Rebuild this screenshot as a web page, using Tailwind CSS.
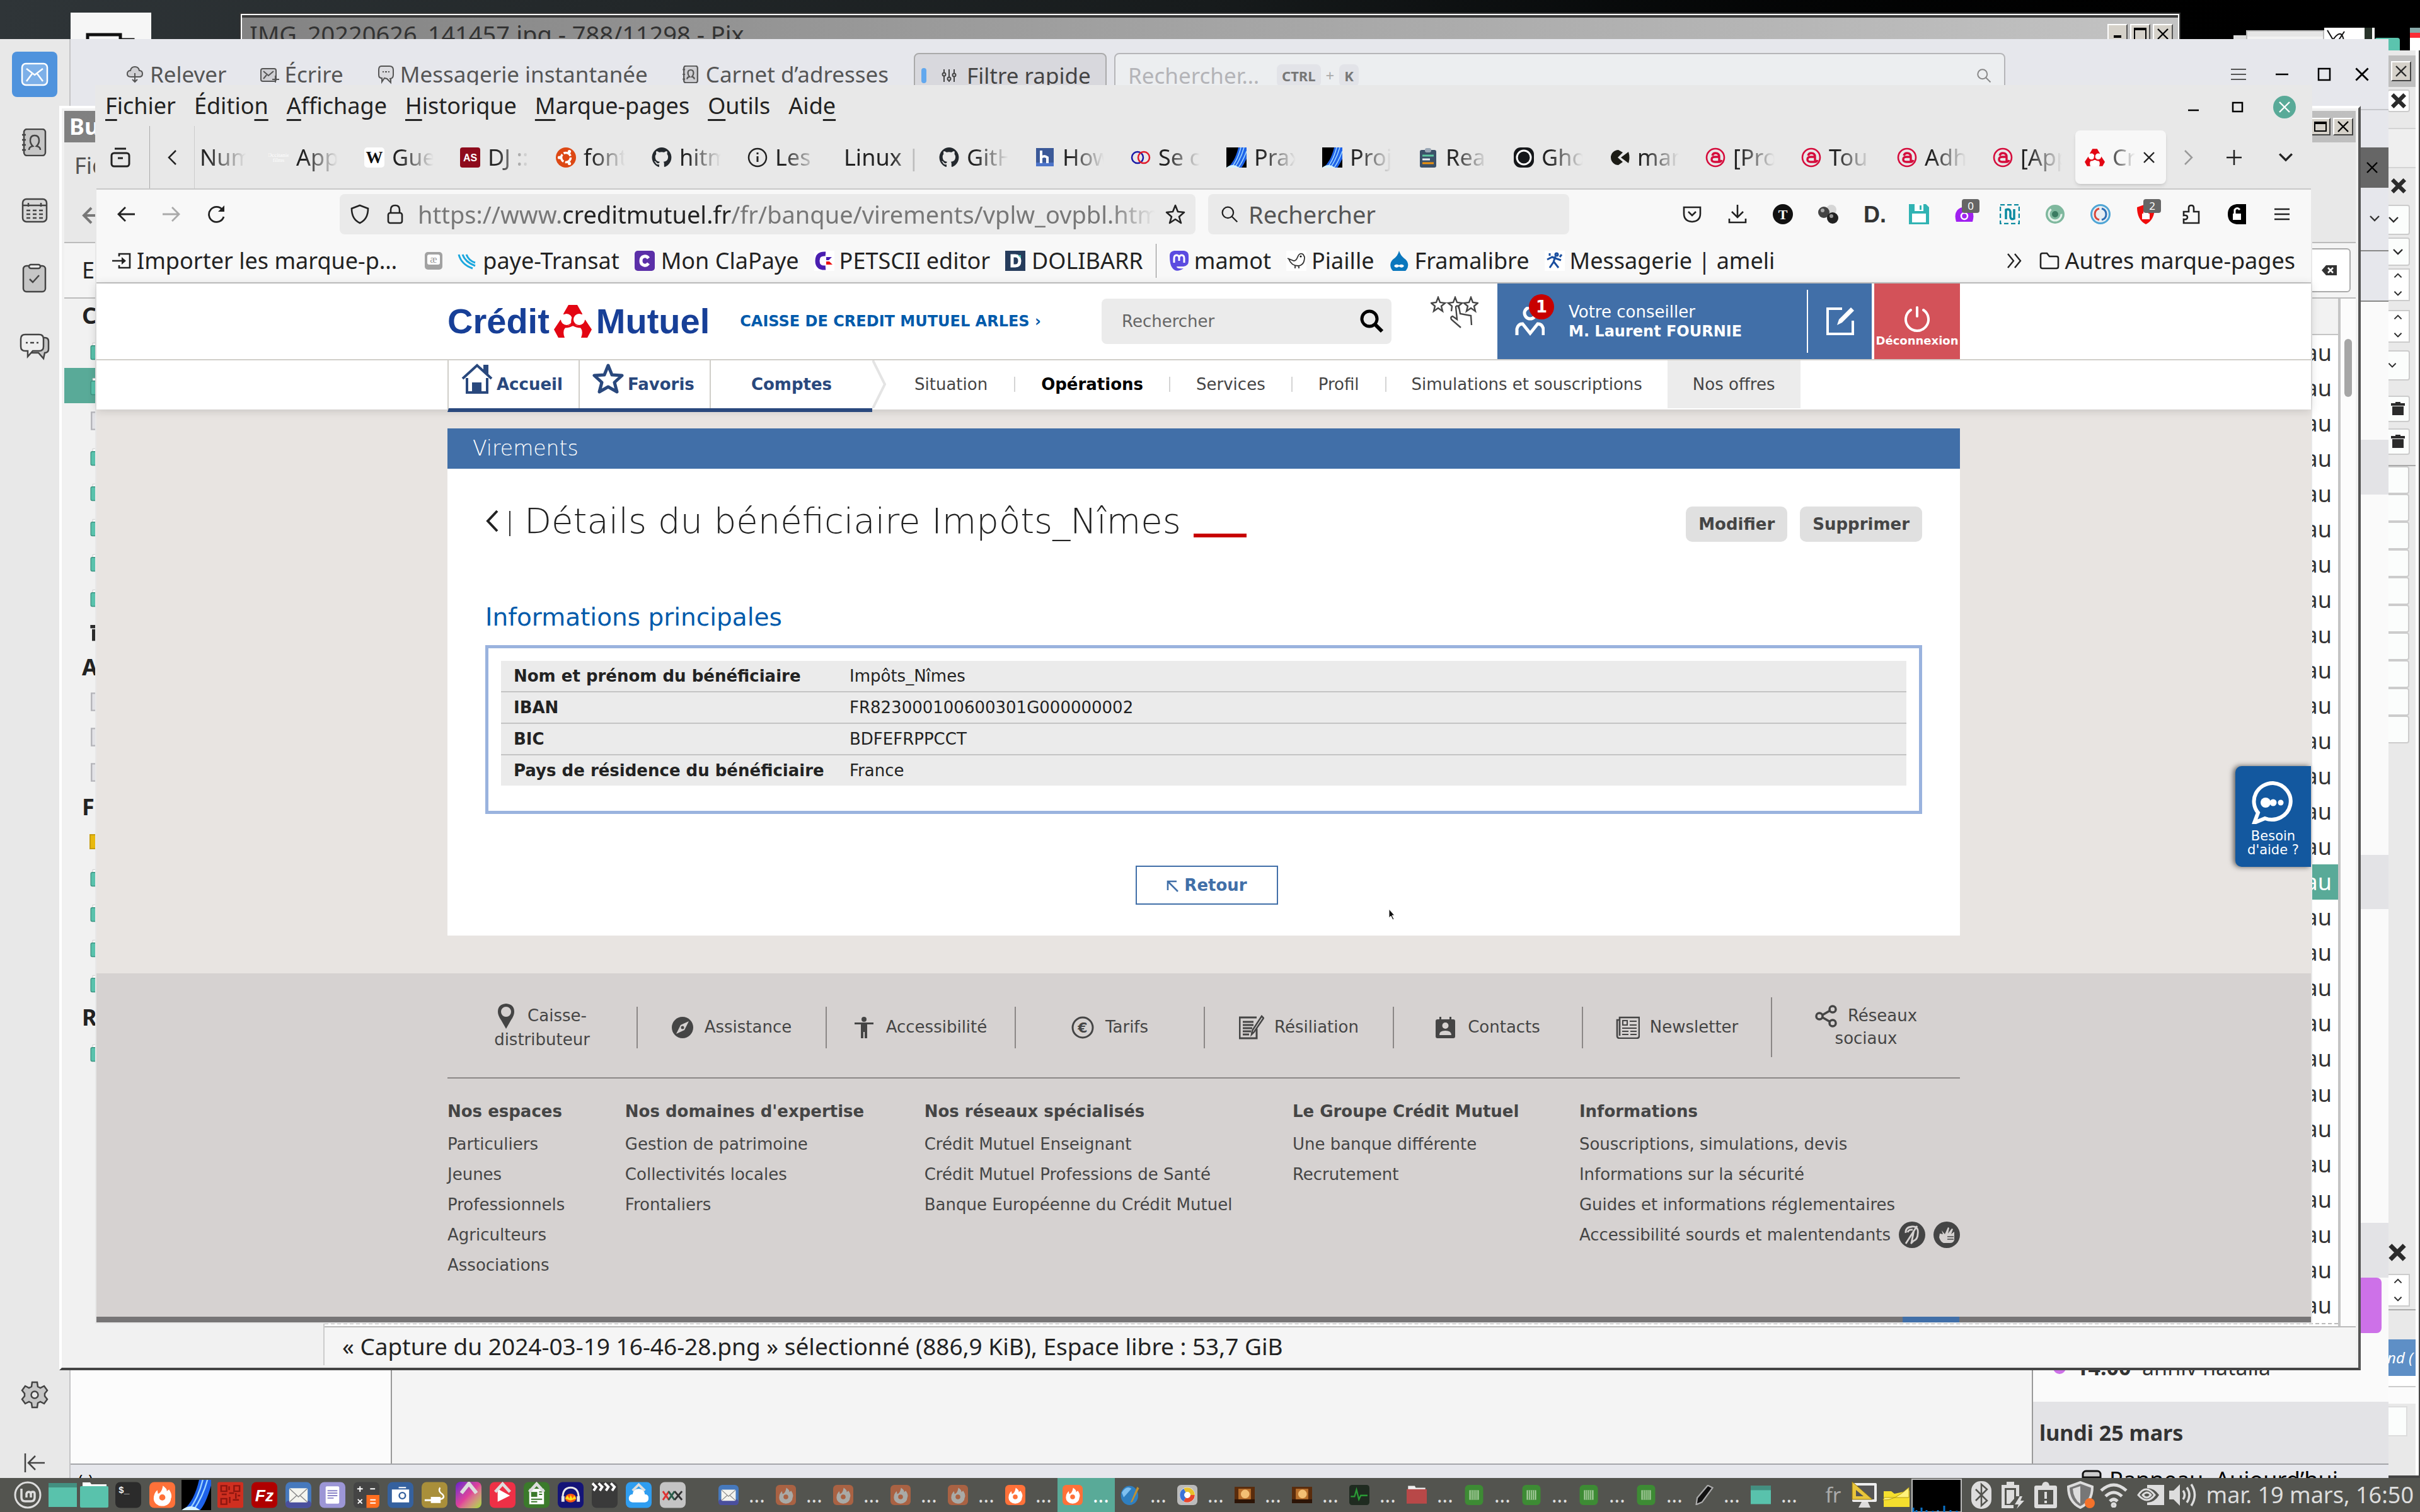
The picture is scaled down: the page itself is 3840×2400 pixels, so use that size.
<!DOCTYPE html>
<html lang="fr">
<head>
    <meta charset="UTF-8">
    <meta name="viewport" content="width=device-width, initial-scale=1.0">
    <title>Crédit Mutuel - Détails du bénéficiaire</title>
    <script src="https://cdn.jsdelivr.net/npm/@tailwindcss/browser@4"></script>
</head>
<body class="relative h-screen w-screen overflow-hidden bg-gradient-to-r from-[#2f3538] via-[#171b1c] to-black font-['Noto_Sans',sans-serif] text-[#222]">

<!-- Shared icons -->
<svg class="hidden">
    <symbol id="x" viewBox="0 0 20 20"><path d="M2 2L18 18M18 2L2 18" fill="none" stroke="currentColor" stroke-width="2.4"/></symbol>
    <symbol id="xb" viewBox="0 0 20 20"><path d="M3 3L17 17M17 3L3 17" fill="none" stroke="currentColor" stroke-width="4.5"/></symbol>
    <symbol id="down" viewBox="0 0 20 20"><path d="M3 6l7 7 7-7" fill="none" stroke="currentColor" stroke-width="2.4"/></symbol>
    <symbol id="up" viewBox="0 0 20 20"><path d="M3 13l7-7 7 7" fill="none" stroke="currentColor" stroke-width="2.4"/></symbol>
    <symbol id="search" viewBox="0 0 32 32"><g fill="none" stroke="currentColor" stroke-width="2.6"><circle cx="13" cy="13" r="10"/><path d="M20 20l10 10"/></g></symbol>
    <symbol id="github" viewBox="0 0 32 32"><path fill="#24292e" d="M16 0a16 16 0 0 0-5 31c.8.100 1-.4 1-.9v-3c-4.500 1-5.400-2-5.400-2-.7-1.800-1.800-2.300-1.800-2.300-1.400-1 .1-1 .1-1 1.600.1 2.500 1.700 2.500 1.700 1.400 2.400 3.700 1.700 4.600 1.300.2-1 .6-1.700 1-2.100-3.500-.4-7.300-1.800-7.300-8 0-1.700.6-3.200 1.700-4.300-.2-.4-.8-2 .1-4.300 0 0 1.300-.4 4.400 1.700a15 15 0 0 1 8 0c3-2.100 4.400-1.700 4.400-1.700.9 2.300.3 3.900.1 4.300 1 1.100 1.700 2.600 1.700 4.300 0 6.200-3.800 7.600-7.400 8 .6.500 1.100 1.500 1.100 3v4.400c0 .500.300 1 1.100.9A16 16 0 0 0 16 0z"/></symbol>
    <symbol id="wiki" viewBox="0 0 32 32"><rect width="32" height="32" rx="5" fill="#fff"/><text x="16" y="25" font-family="Liberation Serif" font-size="27" font-weight="700" text-anchor="middle" fill="#111">W</text></symbol>
    <symbol id="occ" viewBox="0 0 32 32"><text x="16" y="15" font-family="Liberation Serif" font-size="9" text-anchor="middle" fill="#fff">Occitanie</text><text x="16" y="23" font-family="Liberation Serif" font-size="9" text-anchor="middle" fill="#fff">films</text></symbol>
    <symbol id="as" viewBox="0 0 32 32"><rect width="32" height="32" rx="4" fill="#8e0b1c"/><text x="16" y="22" font-family="Liberation Sans" font-size="16" font-weight="700" text-anchor="middle" fill="#fff">AS</text></symbol>
    <symbol id="ubuntu" viewBox="0 0 32 32"><circle cx="16" cy="16" r="16" fill="#dd4814"/><circle cx="16" cy="16" r="7.500" fill="none" stroke="#fff" stroke-width="3.500" stroke-dasharray="13 2.700"/><circle cx="5.500" cy="16" r="2.600" fill="#fff"/><circle cx="21.500" cy="6.500" r="2.600" fill="#fff"/><circle cx="21.500" cy="25.500" r="2.600" fill="#fff"/></symbol>
    <symbol id="info" viewBox="0 0 32 32"><circle cx="16" cy="16" r="14" fill="none" stroke="#222" stroke-width="2.500"/><path d="M16 14v9M16 8v3" stroke="#222" stroke-width="3"/></symbol>
    <symbol id="hb" viewBox="0 0 32 32"><rect x="2" y="1" width="28" height="29" fill="#3b5998"/><rect x="2" y="24" width="28" height="6" fill="#4c74c9"/><path d="M10 5v20M10 16q5-4 10 0v9" fill="none" stroke="#fff" stroke-width="4"/></symbol>
    <symbol id="rings" viewBox="0 0 32 32"><g fill="none" stroke-width="2.500"><circle cx="11" cy="16" r="9" stroke="#1a1aa6"/><circle cx="21" cy="16" r="9" stroke="#e01a2b"/></g></symbol>
    <symbol id="beam" viewBox="0 0 32 32"><rect width="32" height="32" fill="#000"/><path d="M2 32Q14 22 19 0h13v18Q26 30 24 32z" fill="#1e62e8"/><path d="M8 32Q18 20 23 0M13 32Q23 18 28 0M19 32Q26 22 32 6" fill="none" stroke="#9cd4ff" stroke-width="1.600"/><path d="M0 32Q10 24 20 32z" fill="#d8f4ff"/></symbol>
    <symbol id="clip" viewBox="0 0 32 32"><rect x="3" y="4" width="26" height="28" rx="3" fill="#3b5068"/><rect x="11" y="1" width="10" height="7" rx="3" fill="#9aa7b5"/><path d="M7 13h18" stroke="#5ec7a0" stroke-width="3"/><path d="M7 19h12" stroke="#e8edf2" stroke-width="3"/><path d="M7 25h18" stroke="#f0920c" stroke-width="3"/></symbol>
    <symbol id="ghost" viewBox="0 0 32 32"><rect width="32" height="32" rx="11" fill="#15171a"/><circle cx="16" cy="16" r="11" fill="none" stroke="#fff" stroke-width="3"/></symbol>
    <symbol id="man" viewBox="0 0 32 32"><path d="M14 4a12 12 0 1 0 0 24l7-5-8-7 8-8zM30 7l-12 9 12 9q3-9 0-18z" fill="#1c1c16"/></symbol>
    <symbol id="at" viewBox="0 0 32 32"><circle cx="16" cy="16" r="14" fill="none" stroke="#d50c3c" stroke-width="2.600"/><path d="M11 13q1-4 5-4 6 0 6 6v8h-7q-5 0-5-4t5-4h7M22 23q3 0 4-3" fill="none" stroke="#d50c3c" stroke-width="3.400"/></symbol>
    <symbol id="cm" viewBox="0 0 60 52"><path d="M23 0h14l8 14-2 6 7 4 10 15-7 13H43q4-10-1-16-5-5-12-5t-12 5q-5 6-1 16H7L0 39l10-15 7-4-2-6z" fill="#e30613"/><circle cx="20" cy="23" r="9" fill="#fff"/><circle cx="40" cy="23" r="9" fill="#fff"/><circle cx="30" cy="43" r="10" fill="#fff"/><path d="M30 20q-3 8 1 13M10 34q12 3 20-3 8 6 20 3" fill="none" stroke="#e30613" stroke-width="3"/></symbol>
    <symbol id="folder" viewBox="0 0 40 44"><path d="M5 6h12l3 4h15v6H5z" fill="#fff" stroke="#bbb"/><rect x="1" y="12" width="38" height="30" rx="3" fill="#59c2ac" stroke="#3f9583" stroke-width="2"/></symbol>
    <symbol id="note" viewBox="0 0 40 40"><path d="M4 3h22l9 9v25H4z" fill="#e2e2e6" stroke="#b5b5ba" stroke-width="3"/></symbol>
    <symbol id="trash" viewBox="0 0 24 24"><path d="M1 3h22v4H1zM8 1h8v3H8zM3 8h18v14H3z" fill="#2b2b2b"/></symbol>
    <symbol id="firefox" viewBox="0 0 42 42"><rect width="42" height="42" rx="8" fill="#ff7139"/><path d="M22 6q8 6 6 9l4-3q6 9 3 15a14 12 0 0 1-28 0q0-9 6-14l1 6q6-1 8-13z" fill="#fff"/><circle cx="21" cy="25" r="5" fill="#ff7139"/></symbol>
    <symbol id="greendoc" viewBox="0 0 42 42"><rect x="2" width="38" height="42" rx="8" fill="#3d8b34"/><path d="M11 11h20v20H11z" fill="#9fc796"/><path d="M15 11v20M19 11v20M23 11v20M27 11v20" stroke="#3d8b34" stroke-width="1.500"/></symbol>
    <symbol id="mailapp" viewBox="0 0 42 42"><rect width="42" height="42" rx="8" fill="#4679bd"/><rect y="30" width="42" height="12" rx="6" fill="#4a4f9d"/><rect x="6" y="10" width="30" height="23" rx="2" fill="#f4f4ee"/><path d="M7 11l14 13 14-13M7 32l11-10M35 32L24 22" fill="none" stroke="#888" stroke-width="1.500"/></symbol>
</svg>

<!-- Desktop launcher -->
<div class="absolute left-[112px] top-5 flex h-16 w-32 justify-center bg-[#f6f6f6] pt-8">
    <svg class="h-10 w-20" viewBox="0 0 80 40"><path d="M3 40V3h52v8h20v29" fill="none" stroke="#111" stroke-width="5"/></svg>
</div>

<!-- Desktop thumbnails -->
<div class="absolute right-0 top-11 flex h-12 w-[296px] items-end text-[6px]">
    <div class="h-9 w-5 bg-[#ddd]"></div>
    <div class="h-11 w-[124px] overflow-hidden border-2 border-[#bbb] bg-white"><div class="h-2 bg-[#e6e6e6]"></div><div class="h-2 bg-[#f2f2f2]"></div><div class="ml-6 h-2 w-20 bg-[#416fa8]"></div></div>
    <svg class="h-12 w-20" viewBox="0 0 80 48"><rect width="80" height="48" fill="#fff"/><rect x="64" width="12" height="48" fill="#28332a"/><path d="M5 4l12 20M12 22Q30-6 32 30M20 24l12-18" fill="none" stroke="#111" stroke-width="2"/></svg>
    <div class="h-8 w-10 rounded-t bg-[#5bc4ae]"></div>
    <div class="h-12 w-4"></div>
    <div class="h-12 flex-1 border-t-8 border-[#8aa] bg-white"><div class="h-2 bg-red-500"></div></div>
</div>

<!-- Image viewer -->
<section class="absolute left-[380px] right-[380px] top-5 h-20 border-2 border-[#333] bg-white p-[2px]">
    <div class="flex h-full items-start justify-between border-t-4 border-[#3a3a3a] bg-gradient-to-r from-[#838383] via-[#a4a4a4] to-[#c3c3c3]">
        <h2 class="pl-3 text-[38px] leading-[52px] text-[#333]">IMG_20220626_141457.jpg - 788/11298 - Pix</h2>
        <div class="flex gap-1 pr-2 pt-[10px] text-black">
            <button aria-label="Réduire" class="flex h-8 w-8 items-end justify-center border-2 border-r-[#555] border-white bg-[#d5d1c9] pb-2"><span class="h-1 w-3 bg-black"></span></button>
            <button aria-label="Agrandir" class="flex h-8 w-8 items-center justify-center border-2 border-r-[#555] border-white bg-[#d5d1c9]"><span class="h-5 w-5 border-2 border-t-4 border-black"></span></button>
            <button aria-label="Fermer" class="flex h-8 w-8 items-center justify-center border-2 border-r-[#555] border-white bg-[#d5d1c9]"><svg class="h-5 w-5"><use href="#x"/></svg></button>
        </div>
    </div>
</section>

<!-- Side panel window on the far right -->
<section class="absolute bottom-[54px] right-0 top-20 w-[140px] border-b-4 border-r-2 border-[#444] bg-[#e9e9e9]">
    <div class="flex h-full flex-col border-r-[5px] border-white pl-[88px] text-[#2b2b2b]">
        <div class="mt-2 flex h-[50px] items-center bg-[#bfbfbf] pl-[6px]"><button aria-label="Fermer" class="flex h-8 w-8 items-center justify-center border-2 border-b-[#444] border-r-[#444] border-white bg-[#d5d1c9]"><svg class="h-5 w-5"><use href="#x"/></svg></button></div>
        <button aria-label="Fermer le panneau" class="mt-1 flex h-9 w-9 items-center justify-center rounded border-2 border-[#ccc] bg-white"><svg class="h-7 w-7"><use href="#xb"/></svg></button>
        <div class="mt-[25px] h-16 border-y-2 border-[#d4d4d4] bg-[#efefef]"></div>
        <button aria-label="Fermer l'onglet" class="mt-[10px] flex h-9 w-9 items-center justify-center"><svg class="h-7 w-7"><use href="#xb"/></svg></button>
        <div class="mt-3 flex h-12 w-9 items-center rounded-r border-2 border-l-0 border-[#ccc] bg-[#fbfdfc]"><svg class="h-5 w-5"><use href="#down"/></svg></div>
        <div class="mt-1 flex h-[45px] w-9 items-center justify-center rounded-r border-2 border-l-0 border-[#ccc] bg-[#fbfdfc]"><svg class="h-5 w-5"><use href="#down"/></svg></div>
        <div class="mt-1 flex h-[52px] w-9 flex-col items-center justify-between border-2 border-l-0 border-[#ccc] bg-white"><svg class="h-5 w-4"><use href="#up"/></svg><svg class="h-5 w-4"><use href="#down"/></svg></div>
        <div class="mt-[14px] flex h-[52px] w-9 flex-col items-center justify-between border-2 border-l-0 border-[#ccc] bg-white"><svg class="h-5 w-4"><use href="#up"/></svg><svg class="h-5 w-4"><use href="#down"/></svg></div>
        <div class="mt-3 flex h-12 w-9 items-center rounded-r border-2 border-l-0 border-[#ccc] bg-[#fbfdfc]"><svg class="h-4 w-4"><use href="#down"/></svg></div>
        <button aria-label="Supprimer" class="mt-6 flex h-[42px] w-9 items-center justify-center rounded-r border-2 border-l-0 border-[#ccc] bg-[#fbfdfc]"><svg class="h-7 w-6"><use href="#trash"/></svg></button>
        <button aria-label="Supprimer tout" class="mt-[10px] flex h-[42px] w-9 items-center justify-center rounded-r border-2 border-l-0 border-[#ccc] bg-[#fbfdfc]"><svg class="h-7 w-6"><use href="#trash"/></svg></button>
        <div id="slots" class="mt-4 border-t-2 border-[#aaa]"></div>
        <div class="h-[792px]"></div>
        <svg class="h-8 w-8"><use href="#xb"/></svg>
        <div class="mt-[18px] flex h-[52px] w-9 flex-col items-center justify-between border-2 border-l-0 border-[#ccc] bg-white"><svg class="h-5 w-4"><use href="#up"/></svg><svg class="h-5 w-4"><use href="#down"/></svg></div>
        <div class="mt-1 h-12 border-t-2 border-[#aaa]"></div>
        <div class="h-[58px] overflow-hidden whitespace-nowrap bg-[#5e8fc6] text-2xl italic leading-[58px] text-white">nd (</div>
        <div class="h-4 bg-white"></div>
        <div class="h-7 border-t-2 border-[#ccc] bg-[#fbfbfb]"></div>
        <div class="mt-1 h-12 w-8 border-2 border-[#ddd] bg-[#fbfdfc]"></div>
    </div>
</section>

<!-- Mail client -->
<section class="absolute bottom-6 left-0 right-[50px] top-[62px] flex bg-[#e6e7ec]">
    <nav class="flex w-[112px] flex-col items-center border-r-2 border-[#c4c4c6] bg-[#e8e8e8] pt-[2px] text-[#444]">
        <a href="#mail" aria-label="Courrier" class="flex h-[108px] items-center"><span class="flex h-[72px] w-[72px] items-center justify-center rounded-lg bg-[#4f93dd]"><svg class="h-10 w-11" viewBox="0 0 44 40" fill="#7db0e8" stroke="#fff" stroke-width="2.500"><rect x="2" y="3" width="40" height="34" rx="6"/><path d="M9 11l13 10 13-10M9 31l9-12M35 31l-9-12" fill="none"/></svg></span></a>
        <a href="#contacts" aria-label="Carnet d'adresses" class="flex h-[108px] items-center"><svg class="h-11 w-11" viewBox="0 0 44 44" fill="#c6c6c6" stroke="currentColor" stroke-width="2.500"><rect x="5" y="1" width="34" height="42" rx="5"/><path d="M2 10h6M2 18h6M2 26h6M2 34h6M13 34q0-5 6-6-4-4-4-9 0-8 7-8t7 8q0 5-4 9 6 1 6 6" fill="none"/></svg></a>
        <a href="#agenda" aria-label="Agenda" class="flex h-[108px] items-center"><svg class="h-10 w-11" viewBox="0 0 44 40" fill="#d8d8d8" stroke="currentColor" stroke-width="2.500"><rect x="3" y="2" width="38" height="36" rx="6"/><path d="M3 12h38M12 8v6M32 8v6M9 20h6M19 20h6M29 20h6M9 26h6M19 26h6M29 26h6M9 32h6M19 32h6M29 32h6" fill="none"/></svg></a>
        <a href="#taches" aria-label="Tâches" class="flex h-[108px] items-center"><svg class="h-12 w-11" viewBox="0 0 44 48" fill="#c6c6c6" stroke="currentColor" stroke-width="2.500"><rect x="4" y="4" width="35" height="41" rx="5"/><rect x="13" y="2" width="18" height="6" rx="3" fill="#eee"/><path d="M14 25l5 5 10-11" fill="none"/></svg></a>
        <a href="#chat" aria-label="Discussion" class="flex h-[108px] items-center"><svg class="h-11 w-12" viewBox="0 0 48 44" fill="#c6c6c6" stroke="currentColor" stroke-width="2.500"><path d="M36 8h4q6 0 6 6v12q0 6-6 6l-2 9-8-9H18"/><path d="M9 3h22q7 0 7 7v12q0 7-7 7H21l-8 9v-9H9q-7 0-7-7V10q0-7 7-7z" fill="#eee"/><path d="M10 16h3M17 16h6M27 16h3" fill="none"/></svg></a>
        <button aria-label="Paramètres" class="mt-auto flex h-[108px] items-center"><svg class="h-11 w-11" viewBox="0 0 44 44" fill="#c6c6c6" stroke="currentColor" stroke-width="2.500"><path d="M18 2h8l1 7 4 2 6-3 5 7-4 5v4l4 5-5 7-6-3-4 2-1 7h-8l-1-7-4-2-6 3-5-7 4-5v-4l-4-5 5-7 6 3 4-2z"/><circle cx="22" cy="22" r="5.500" fill="#e8e8e8"/></svg></button>
        <button aria-label="Replier" class="flex h-[108px] items-center"><svg class="h-8 w-9" viewBox="0 0 36 32" fill="none" stroke="currentColor" stroke-width="2.500"><path d="M3 1v30M34 16H9M19 5L8 16l11 11"/></svg></button>
    </nav>
    <div class="flex min-w-0 flex-1 flex-col">
        <div class="flex h-[111px] items-start pt-[22px] text-[35px] leading-[68px] text-[#555]">
            <button class="ml-[88px] flex items-center gap-[10px]"><svg class="h-7 w-7" viewBox="0 0 28 28" fill="#cfcfd3" stroke="currentColor" stroke-width="2"><path d="M8 18Q1 18 2 12q1-4 5-4 1-6 7-6t7 6q5 0 5 5t-5 5z"/><path d="M14 12v14M10 22l4 4 4-4" fill="none"/></svg>Relever</button>
            <button class="ml-[52px] flex items-center gap-2"><svg class="h-7 w-8" viewBox="0 0 32 28" fill="#cfcfd3" stroke="currentColor" stroke-width="2"><rect x="2" y="5" width="24" height="20" rx="3"/><path d="M6 9l8 7 8-7M6 21l5-6M25 16v11M20 22h11" fill="none"/></svg>Écrire</button>
            <button class="ml-[54px] flex items-center gap-2"><svg class="h-8 w-7" viewBox="0 0 28 32" fill="#dcdce0" stroke="currentColor" stroke-width="2"><path d="M6 3h13q6 0 6 6v8q0 6-6 6h2v6l-6-6-4-1-4 6v-6Q2 22 2 17V9q0-6 4-6z"/><path d="M8 12h2M12 12h3M17 12h2"/></svg>Messagerie instantanée</button>
            <button class="ml-[54px] flex items-center gap-[10px]"><svg class="h-7 w-7" viewBox="0 0 44 44" fill="#cfcfd3" stroke="currentColor" stroke-width="3.500"><rect x="5" y="1" width="34" height="42" rx="5"/><path d="M2 10h6M2 22h6M2 34h6M13 34q0-5 6-6-4-4-4-9 0-8 7-8t7 8q0 5-4 9 6 1 6 6" fill="none"/></svg>Carnet d’adresses</button>
            <button class="ml-10 flex h-[72px] w-[306px] items-center gap-4 rounded-lg border-2 border-[#aaa] bg-[#d8d8dd] pl-[10px] text-[#444]"><span class="h-6 w-2 rounded bg-[#62a8ee]"></span><svg class="ml-2 h-6 w-6" viewBox="0 0 24 24" fill="none" stroke="currentColor" stroke-width="2"><path d="M4 2v5M4 13v9M12 2v12M12 20v2M20 2v6M20 14v8"/><circle cx="4" cy="10" r="2.500"/><circle cx="12" cy="17" r="2.500"/><circle cx="20" cy="11" r="2.500"/></svg>Filtre rapide</button>
            <label class="ml-3 flex h-[72px] min-w-0 flex-1 items-center rounded-t-lg border-2 border-[#b5b5b8] bg-[#eceef0] px-5">
                <input type="search" aria-label="Rechercher dans les messages" placeholder="Rechercher…" class="w-[236px] placeholder:text-[#b4b4b8]">
                <kbd class="rounded-lg bg-[#e2e3e8] px-2 font-['Noto_Sans',sans-serif] text-[22px] font-bold leading-9 text-[#777]">CTRL</kbd><span class="px-2 text-2xl text-[#aaa]">+</span><kbd class="rounded-lg bg-[#e2e3e8] px-2 font-['Noto_Sans',sans-serif] text-[22px] font-bold leading-9 text-[#777]">K</kbd>
                <svg class="ml-auto h-6 w-6 text-[#888]"><use href="#search"/></svg>
            </label>
            <div class="ml-[358px] mr-[30px] flex h-[68px] items-center gap-9 text-black">
                <svg class="h-6 w-6 text-[#555]" viewBox="0 0 24 24"><path d="M0 4h24M0 12h24M0 20h24" stroke="currentColor" stroke-width="2"/></svg>
                <svg class="h-6 w-10" viewBox="0 0 40 24"><path d="M11 12h20" stroke="currentColor" stroke-width="2.500"/></svg>
                <svg class="h-6 w-6" viewBox="0 0 24 24"><rect x="3" y="3" width="18" height="18" fill="none" stroke="currentColor" stroke-width="2.500"/></svg>
                <svg class="h-6 w-6"><use href="#x"/></svg>
            </div>
        </div>
        <div class="flex min-h-0 flex-1 border-t-2 border-[#c6c7cb]">
            <div class="w-[510px] border-r-2 border-[#999] bg-[#fcfcfc]"></div>
            <div class="flex-1 bg-[#f4f4f4]"></div>
            <aside class="flex w-[566px] flex-col border-l-2 border-[#999] bg-[#fafafa] text-[#333]">
                <div class="h-[61px] bg-[#e6e7ec]"></div>
                <div class="flex h-[65px] items-center justify-end bg-[#666] pr-4 text-black"><svg class="h-5 w-5"><use href="#x"/></svg></div>
                <div class="flex h-[104px] items-center justify-end border-b-2 border-[#888] bg-[#e6e7ec] pr-3"><svg class="h-5 w-5"><use href="#down"/></svg></div>
                <div class="h-[82px] border-b-2 border-[#888] bg-[#e6e7ec]"></div>
                <div class="mt-[219px] h-[90px] bg-[#e3e3e6]"></div>
                <div class="mt-[572px] h-[88px] bg-[#e3e3e6]"></div>
                <div class="mt-[498px] h-[90px] bg-[#e3e3e6]"></div>
                <div class="mr-[11px] h-[90px] rounded-lg bg-[#cd71e8]"></div>
                <div class="flex h-[112px] items-center gap-4 pl-8 text-[34px]"><span class="h-5 w-5 rounded-full bg-[#cd71e8]"></span><span><b>14:00</b> &nbsp;anniv natalia</span></div>
                <div class="flex-1 bg-[#e3e3e6] pl-[10px] text-[34px] font-bold leading-[98px]">lundi 25 mars</div>
            </aside>
        </div>
        <div class="flex h-[53px] items-start justify-between border-t-2 border-[#a5a6aa] pl-3 pt-2 text-[36px] leading-8 text-black">
            <span class="text-2xl">(•)</span>
            <span class="flex items-center gap-3 pr-[80px]"><svg class="h-8 w-8" viewBox="0 0 32 32"><rect x="2" y="2" width="28" height="28" rx="5" fill="#ccc" stroke="#111" stroke-width="3"/><path d="M2 12h28" stroke="#111" stroke-width="3"/></svg>Panneau&nbsp; Aujourd’hui</span>
        </div>
    </div>
</section>

<!-- File manager -->
<section class="absolute bottom-[225px] left-[94px] right-[94px] top-[168px] border-4 border-b-[#444] border-l-white border-r-[#555] border-t-white bg-[#f1f1f1] p-1 text-[36px]">
    <div class="flex h-full flex-col">
        <div class="flex h-[50px] items-center bg-gradient-to-r from-[#808080] to-[#bfbfbf] pl-2 pr-1 font-bold text-white">Bureau
            <span class="ml-auto flex gap-1 text-black">
                <button aria-label="Agrandir" class="flex h-7 w-8 items-center justify-center border-2 border-b-[#444] border-r-[#444] border-white bg-[#d5d1c9]"><span class="h-4 w-5 border-2 border-t-4 border-black"></span></button>
                <button aria-label="Fermer" class="flex h-7 w-8 items-center justify-center border-2 border-b-[#444] border-r-[#444] border-white bg-[#d5d1c9]"><svg class="h-5 w-5"><use href="#x"/></svg></button>
            </span>
        </div>
        <div class="h-[74px] bg-[#e8e8e8] pl-4 leading-[74px] text-[#555]">Fichier</div>
        <div class="flex h-[86px] items-center border-b-2 border-[#bbb] bg-[#e8e8e8] pl-7 text-[#777]"><svg class="h-8 w-8" viewBox="0 0 32 32"><path d="M31 16H4M15 4L3 16l12 12" fill="none" stroke="currentColor" stroke-width="4"/></svg></div>
        <div class="flex h-[88px] items-center justify-between border-b-2 border-[#bbb] bg-[#f4f4f4] pl-7 pr-2">Emplacement<span class="flex h-[70px] w-24 items-center justify-end rounded-md border-2 border-[#aaa] bg-white pr-5"><svg class="h-5 w-6" viewBox="0 0 24 20"><path d="M0 10L7 2h17v16H7z" fill="#333"/><path d="M10 6l8 8M18 6l-8 8" stroke="#fff" stroke-width="2.500"/></svg></span></div>
        <div class="flex min-h-0 flex-1">
            <ul id="places" class="w-[413px] shrink-0 border-r-2 border-[#ccc] font-bold"></ul>
            <div class="flex min-w-0 flex-1 flex-col">
                <div class="flex min-h-0 flex-1 border-b-2 border-[#bbb]">
                    <div class="min-w-0 flex-1 overflow-hidden border-r-4 border-[#c4c4c4] bg-white">
                        <div class="h-[58px] border-b-2 border-[#c4c4c4] bg-[#f2f2f2]"></div>
                        <ul id="files" class="text-right leading-[56px] text-[#333]"></ul>
                        <div class="border-t-2 border-dashed border-[#bbb]"></div>
                    </div>
                    <div class="flex w-6 justify-center bg-[#fcfcfc] pt-[64px]"><div class="h-[92px] w-3 rounded-full bg-[#a6a6a6]"></div></div>
                </div>
                <p class="bg-[#f5f5f5] pl-7 text-[37px] leading-[60px] text-[#222]">« Capture du 2024-03-19 16-46-28.png » sélectionné (886,9 KiB), Espace libre : 53,7 GiB</p>
            </div>
        </div>
    </div>
</section>

<!-- Browser -->
<main class="absolute bottom-[299px] left-[151px] right-[171px] top-[135px] flex flex-col border-x-2 border-b-2 border-[#e8e8e8] bg-[#e8e8e8]">
    <div class="flex h-[65px] items-center text-[36px]">
        <nav class="flex gap-[29px] pl-[14px] leading-[68px]">
            <a href="#f"><u class="underline-offset-8">F</u>ichier</a><a href="#e">Éditio<u class="underline-offset-8">n</u></a><a href="#a"><u class="underline-offset-8">A</u>ffichage</a><a href="#h"><u class="underline-offset-8">H</u>istorique</a><a href="#m"><u class="underline-offset-8">M</u>arque-pages</a><a href="#o"><u class="underline-offset-8">O</u>utils</a><a href="#aide">Aid<u class="underline-offset-8">e</u></a>
        </nav>
        <div class="ml-auto flex items-center gap-[50px] pr-[24px] pt-1 text-black">
            <button aria-label="Réduire"><svg class="h-5 w-5" viewBox="0 0 20 20"><path d="M1 15h17" stroke="currentColor" stroke-width="2.500"/></svg></button>
            <button aria-label="Agrandir"><svg class="h-5 w-5" viewBox="0 0 20 20"><rect x="2" y="3" width="15" height="14" fill="none" stroke="currentColor" stroke-width="2.500"/></svg></button>
            <button aria-label="Fermer" class="-ml-1 flex h-9 w-9 items-center justify-center rounded-full bg-[#59aa98] text-white"><svg class="h-5 w-5"><use href="#x"/></svg></button>
        </div>
    </div>
    <div class="flex h-[101px] items-center border-b-2 border-[#c8c8c8]">
        <div class="flex h-full w-[85px] items-center justify-center border-r border-[#aaa]"><svg class="mr-2 h-8 w-8" viewBox="0 0 32 32" fill="none" stroke="#222" stroke-width="3"><path d="M7 2h18"/><rect x="2" y="9" width="28" height="21" rx="4"/><path d="M12 17h8"/></svg></div>
        <button aria-label="Onglets précédents" class="flex h-full w-[71px] items-center justify-center border-r border-[#ccc]"><svg class="h-6 w-4" viewBox="0 0 16 24"><path d="M14 1L3 12l11 11" fill="none" stroke="#222" stroke-width="2.500"/></svg></button>
        <div id="tabs" class="flex h-full min-w-0 flex-1 items-center overflow-hidden text-[36px]"></div>
        <div class="flex h-[85px] w-36 shrink-0 items-center rounded-lg bg-[#f8f8f8] pl-[15px] text-[36px] shadow-md">
            <svg class="h-8 w-8"><use href="#cm"/></svg><span class="ml-3 w-9 overflow-hidden text-[#444] [mask-image:linear-gradient(to_right,black,transparent)]">Cré</span><svg class="ml-3 h-5 w-5"><use href="#x"/></svg>
        </div>
        <div class="flex items-center gap-12 pl-6 pr-[26px]">
            <svg class="h-6 w-6 text-[#999]" viewBox="0 0 24 24"><path d="M6 1l11 11L6 23" fill="none" stroke="currentColor" stroke-width="2.500"/></svg>
            <svg class="h-6 w-6" viewBox="0 0 24 24"><path d="M12 0v24M0 12h24" stroke="currentColor" stroke-width="2.500"/></svg>
            <svg class="ml-2 h-7 w-7"><use href="#down"/></svg>
        </div>
    </div>
    <div class="flex h-[78px] items-center bg-[#f8f8f8] text-[38px]">
        <div class="flex w-[386px] gap-11 pl-[33px]">
            <button aria-label="Précédent"><svg class="h-7 w-7" viewBox="0 0 28 28" fill="none" stroke="#222" stroke-width="2.800"><path d="M28 14H2M13 3L2 14l11 11"/></svg></button>
            <button aria-label="Suivant"><svg class="h-7 w-7" viewBox="0 0 28 28" fill="none" stroke="#aaa" stroke-width="2.800"><path d="M0 14h26M15 3l11 11-11 11"/></svg></button>
            <button aria-label="Actualiser"><svg class="h-7 w-7" viewBox="0 0 28 28" fill="none" stroke="#222" stroke-width="2.800"><path d="M25 18A12 12 0 1 1 23 7"/><path d="M26 0v10H16z" fill="#222" stroke="none"/></svg></button>
        </div>
        <div class="flex h-16 w-[1358px] items-center rounded-lg bg-[#eaeaea] pl-4 pr-4">
            <svg class="h-8 w-8" viewBox="0 0 32 32" fill="none" stroke="#222" stroke-width="2.600"><path d="M16 2l13 5q0 17-13 23Q3 24 3 7z"/></svg>
            <svg class="ml-6 h-8 w-8" viewBox="0 0 32 32" fill="none" stroke="#222" stroke-width="2.600"><rect x="5" y="14" width="22" height="16" rx="3"/><path d="M9 14V9q0-7 7-7t7 7v5"/></svg>
            <span class="ml-5 min-w-0 flex-1 overflow-hidden whitespace-nowrap text-[#777] [mask-image:linear-gradient(to_right,black_94%,transparent)]">https://www.<span class="text-[#222]">creditmutuel.fr</span>/fr/banque/virements/vplw_ovpbl.html</span>
            <svg class="ml-4 h-8 w-8" viewBox="0 0 32 32" fill="none" stroke="#222" stroke-width="2.600"><path d="M16 2l4 10 10 1-8 7 3 10-9-6-9 6 3-10-8-7 10-1z" stroke-linejoin="round"/></svg>
        </div>
        <label class="ml-5 flex h-16 w-[573px] items-center gap-4 rounded-lg bg-[#eaeaea] pl-5"><svg class="h-7 w-7"><use href="#search"/></svg><input type="search" aria-label="Rechercher sur le Web" placeholder="Rechercher" class="min-w-0 flex-1 placeholder:text-[#555]"></label>
        <div class="ml-auto flex gap-10 pr-[30px]">
            <svg class="h-8 w-8" viewBox="0 0 32 32" fill="none" stroke="#222" stroke-width="2.600"><path d="M3 5h26v10q0 12-13 13Q3 27 3 15zM10 12l6 6 6-6"/></svg>
            <svg class="h-8 w-8" viewBox="0 0 32 32" fill="none" stroke="#222" stroke-width="2.600"><path d="M16 1v19M7 12l9 9 9-9M3 23v6h26v-6"/></svg>
            <svg class="h-8 w-8" viewBox="0 0 32 32"><circle cx="16" cy="16" r="16" fill="#111"/><text x="16" y="24" font-family="Liberation Serif" font-size="22" font-weight="700" text-anchor="middle" fill="#fff">T</text></svg>
            <svg class="h-8 w-8" viewBox="0 0 32 32"><circle cx="21" cy="9" r="8" fill="#d6d6d6"/><circle cx="9" cy="13" r="9" fill="#444"/><circle cx="23" cy="22" r="9" fill="#222"/><circle cx="7" cy="10" r="3" fill="#aaa"/><circle cx="21" cy="19" r="3" fill="#999"/></svg>
            <svg class="h-8 w-9" viewBox="0 0 36 32"><text x="0" y="29" font-family="Liberation Sans" font-size="36" font-weight="700" fill="#333">D.</text></svg>
            <svg class="-ml-1 h-8 w-8" viewBox="0 0 32 32"><path d="M0 0h27l5 5v27H0z" fill="#31b3b3"/><path d="M5 15h22v14H5zM9 0h14v11H9z" fill="#fff"/><path d="M17 2h3v7h-3z" fill="#31b3b3"/></svg>
            <div class="relative h-8 w-8"><svg class="h-8 w-8" viewBox="0 0 32 32"><path d="M3 28q-6-20 13-24 19 4 13 24z" fill="#a020f0"/><circle cx="16" cy="19" r="5" fill="none" stroke="#fff" stroke-width="2.500"/></svg><span class="absolute -right-2 -top-2 h-[22px] w-7 rounded bg-[#666] text-center text-[17px] leading-[22px] text-white">0</span></div>
            <svg class="h-8 w-8" viewBox="0 0 32 32"><rect x="1" y="1" width="30" height="30" fill="none" stroke="#0c8aa0" stroke-width="2.500" stroke-dasharray="7 4"/><path d="M10 24V9q8-3 7 7t6 7V8" fill="none" stroke="#0c8aa0" stroke-width="3.500"/></svg>
            <svg class="h-8 w-8" viewBox="0 0 32 32"><circle cx="16" cy="16" r="15" fill="#7fb89e"/><circle cx="16" cy="16" r="10" fill="none" stroke="#e6f3ec" stroke-width="3" stroke-dasharray="40 22"/><circle cx="16" cy="16" r="5" fill="#3b7b62"/></svg>
            <svg class="h-8 w-8" viewBox="0 0 32 32" fill="none"><circle cx="16" cy="16" r="14.500" fill="#e8eef3" stroke="#4fa5d5" stroke-width="3"/><path d="M14 7q-7 2-7 9t7 9" stroke="#d9483b" stroke-width="3"/><path d="M18 7q7 2 7 9t-7 9" stroke="#2f6fb5" stroke-width="3"/></svg>
            <div class="relative h-8 w-8"><svg class="h-8 w-8" viewBox="0 0 32 32"><path d="M16 0l14 5q0 20-14 27Q2 25 2 5z" fill="#f00d0d"/><path d="M10 15h12v9H10zM12 15q0-7 4-7t4 7" fill="#fff"/></svg><span class="absolute -right-2 -top-2 h-[22px] w-7 rounded bg-[#666] text-center text-[17px] leading-[22px] text-white">2</span></div>
            <svg class="h-8 w-8" viewBox="0 0 32 32" fill="none" stroke="#222" stroke-width="2.600"><path d="M4 12h8V6q0-4 4-4t4 4v6h8v18H4v-6q6 1 6-3t-6-3z"/></svg>
            <svg class="h-8 w-8" viewBox="0 0 32 32"><path d="M31 0H16Q2 2 2 16t14 16h15z" fill="#000"/><path d="M10 15h13v10H10z" fill="#fff"/><path d="M13 15V9q4-5 8 0" fill="none" stroke="#fff" stroke-width="3"/></svg>
            <svg class="h-8 w-8" viewBox="0 0 32 32"><path d="M4 8h24M4 16h24M4 24h24" stroke="#222" stroke-width="2.600"/></svg>
        </div>
    </div>
    <nav class="flex h-[71px] items-center gap-6 whitespace-nowrap border-b-2 border-[#c4c4c4] bg-[#f8f8f8] pl-6 pr-[25px] text-[36px]">
        <a href="#b1" class="flex items-center gap-2"><svg class="h-7 w-8" viewBox="0 0 32 28" fill="none" stroke="#222" stroke-width="2.600"><path d="M12 7V3h17v22H12v-4M1 14h18"/><path d="M16 8l7 6-7 6z" fill="#222" stroke="none"/></svg>Importer les marque-p…</a>
        <a href="#b2" aria-label="æ" class="ml-5"><svg class="h-7 w-7" viewBox="0 0 28 28"><rect width="28" height="28" rx="5" fill="#a2a2a2"/><rect x="4" y="4" width="20" height="16" rx="3" fill="#fff"/><text x="14" y="17" font-family="Liberation Serif" font-size="17" text-anchor="middle" fill="#999">æ</text></svg></a>
        <a href="#b3" class="flex items-center gap-2"><svg class="h-8 w-8" viewBox="0 0 32 32" fill="none" stroke="#1ba7de" stroke-width="3"><path d="M2 6q4 16 22 22M8 6q4 12 20 18M14 6q4 10 14 13"/></svg>paye-Transat</a>
        <a href="#b4" class="flex items-center gap-[10px]"><svg class="h-8 w-8" viewBox="0 0 32 32"><rect width="32" height="32" rx="5" fill="#5b2fa8"/><path d="M22 12q-3-4-7-3-5 1-5 7t5 7q4 1 7-3" fill="none" stroke="#fff" stroke-width="5"/></svg>Mon ClaPaye</a>
        <a href="#b5" class="flex items-center gap-2"><svg class="h-8 w-8" viewBox="0 0 32 32"><rect width="32" height="32" fill="#fff"/><path d="M18 5q-13-1-13 11t13 11" fill="none" stroke="#4a1fb0" stroke-width="7"/><path d="M19 10h9l-5 5h-4z" fill="#4a1fb0"/><path d="M19 17h5l5 5H19z" fill="#e11"/></svg>PETSCII editor</a>
        <a href="#b6" class="flex items-center gap-[10px]"><svg class="h-8 w-8" viewBox="0 0 32 32"><rect width="32" height="32" fill="#263c5c"/><path d="M11 8h5q7 0 7 8t-7 8h-5z" fill="none" stroke="#fff" stroke-width="5"/><path d="M20 7h5v5z" fill="#4ac0b0"/></svg>DOLIBARR</a>
        <span class="-mx-1 h-[54px] w-px bg-[#888]"></span>
        <a href="#b7" class="flex items-center gap-2"><svg class="h-8 w-8" viewBox="0 0 32 32"><path d="M8 0h16q7 1 7 8v8q0 8-8 9H12q0 4 11 3-12 8-18-1Q1 22 1 8q0-7 7-8z" fill="#5b4be0"/><path d="M8 19v-7q0-5 4-5t4 5v4-4q0-5 4-5t4 5v7" fill="none" stroke="#fff" stroke-width="3"/></svg>mamot</a>
        <a href="#b8" class="flex items-center gap-2"><svg class="h-8 w-8" viewBox="0 0 32 32"><rect width="32" height="32" fill="#fff"/><path d="M2 12l10 4q4 0 6-6 3-8 9-4l2 4q0 13-10 14Q8 24 4 13M14 23v5M20 23v5" fill="none" stroke="#333" stroke-width="1.800"/><circle cx="23" cy="9" r="1.500"/></svg>Piaille</a>
        <a href="#b9" class="flex items-center gap-2"><svg class="h-8 w-8" viewBox="0 0 32 32"><path d="M16 0q2 7 8 12a14 13 0 1 1-18 2Q14 9 16 0z" fill="#0a77bd"/><path d="M8 24q3-4 8-1 5-3 8 1-3 5-8 1-5 4-8-1z" fill="#fff"/></svg>Framalibre</a>
        <a href="#b10" class="flex items-center gap-2"><svg class="h-8 w-8" viewBox="0 0 32 32"><rect width="32" height="32" fill="#fff"/><g fill="none" stroke="#1b4fa0" stroke-width="3"><circle cx="19" cy="6" r="2"/><path d="M17 9l-3 9-6 9M15 18l7 9M4 14l8-4 5 2 9 3M8 4v4M27 6l-3 4"/></g></svg>Messagerie | ameli</a>
        <span class="ml-auto flex items-center gap-7"><svg class="h-6 w-6" viewBox="0 0 24 24" fill="none" stroke="#222" stroke-width="2.400"><path d="M2 1l9 11L2 23M13 1l9 11-9 11"/></svg>
        <a href="#b11" class="flex items-center gap-2"><svg class="h-7 w-8" viewBox="0 0 32 28" fill="none" stroke="#222" stroke-width="2.600"><path d="M2 23V5q0-3 3-3h7l4 5h11q3 0 3 3v13q0 3-3 3H5q-3 0-3-3z"/></svg>Autres marque-pages</a></span>
    </nav>

    <!-- Bank page -->
    <div class="relative flex min-h-0 flex-1 flex-col border-b-[9px] border-[#777576] bg-[#e8e4e1] font-['DejaVu_Sans',sans-serif] text-[26px] text-[#454545]">
        <header class="bg-white shadow-[0_2px_14px_rgba(0,0,0,0.15)]">
            <div class="border-b-2 border-[#d0cec9]">
                <div class="mx-auto flex h-[120px] w-[2400px] items-center">
                    <a href="#accueil" class="flex items-center font-['Liberation_Sans',sans-serif] text-[56px] font-bold text-[#173f97]">Crédit<svg class="mx-[7px] h-[52px] w-[60px]"><use href="#cm"/></svg>Mutuel</a>
                    <a href="#caisse" class="ml-[48px] text-2xl font-bold text-[#005aab]">CAISSE DE CREDIT MUTUEL ARLES ›</a>
                    <label class="ml-auto flex h-[72px] w-[460px] items-center rounded-lg bg-[#ebebeb] px-8"><input type="search" aria-label="Rechercher" placeholder="Rechercher" class="min-w-0 flex-1 placeholder:text-[#666]"><svg class="-mr-5 h-[38px] w-[38px]" viewBox="0 0 38 38" fill="none" stroke="#000"><circle cx="15" cy="15" r="12" stroke-width="5"/><path d="M24 24l11 11" stroke-width="6"/></svg></label>
                    <svg class="ml-[62px] mr-[30px] mt-5 h-[52px] w-[76px] self-start" viewBox="0 0 76 52" fill="none" stroke="#454545" stroke-width="2.400"><path d="M12 2l3 8 8 1-6 5 2 8-7-5-7 5 2-8-6-5 8-1zM64 2l3 8 8 1-6 5 2 8-7-5-7 5 2-8-6-5 8-1zM33 24l1-8-6-5 8-1 3-8 3 8 8 1-6 5 1 4M48 50L33 37q-2-4 2-5l7 5-2-20q2-3 5 0l2 11 17 3 1 15"/></svg>
                    <a href="#conseiller" class="flex h-[120px] w-[594px] items-center bg-[#416fa8] text-white">
                        <span class="relative ml-7 h-[46px] w-[47px]"><svg class="h-[46px] w-[47px]" viewBox="0 0 47 46" fill="none" stroke="#fff" stroke-width="5"><circle cx="24" cy="10" r="9"/><path d="M3 45V35q2-8 9-8l12 15 12-15q7 0 9 8v10"/></svg><b class="absolute -top-5 left-[22px] flex h-10 w-10 items-center justify-center rounded-full bg-[#c80000] text-[26px]">1</b></span>
                        <span class="ml-[38px] leading-[30px]">Votre conseiller<br><b class="text-2xl leading-[30px]">M. Laurent FOURNIE</b></span>
                        <span class="ml-auto flex h-[100px] w-[103px] items-center justify-center border-l-2 border-white"><svg class="h-[46px] w-[46px]" viewBox="0 0 46 46" fill="none" stroke="#fff" stroke-width="4"><path d="M26 3H3v40h40V22"/><path d="M18 29l3-9L40 1l5 5-19 19z" fill="#fff" stroke="none"/></svg></span>
                    </a>
                    <button class="ml-1 flex h-[120px] w-[136px] flex-col items-center bg-[#d35259] pt-9 text-[18px] font-bold leading-[18px] text-white"><svg class="mb-1 h-[42px] w-[42px]" viewBox="0 0 42 42" fill="none" stroke="#fff" stroke-width="4" stroke-linecap="round"><path d="M21 2v14M11 6a18 18 0 1 0 20 0"/></svg>Déconnexion</button>
                </div>
            </div>
            <nav class="mx-auto flex h-[78px] w-[2400px] items-start leading-[76px]">
                <div class="flex h-[82px] w-[674px] shrink-0 border-b-[6px] border-l-2 border-b-[#29487d] border-l-[#d0cec9] font-bold text-[#29487d]">
                    <a href="#1" class="flex w-[208px] gap-[6px] border-r-2 border-[#d0cec9] pl-5"><svg class="mt-1 h-[50px] w-[50px]" viewBox="0 0 50 50" fill="none" stroke="#29487d" stroke-width="4"><path d="M2 25L25 4l23 21M37 14V5h4v14M9 24v23h32V24"/><path d="M19 47V33h11v14z" fill="#29487d"/></svg>Accueil</a>
                    <a href="#2" class="flex w-[208px] gap-[6px] border-r-2 border-[#d0cec9] pl-5"><svg class="mt-1 h-[50px] w-[50px]" viewBox="0 0 50 50" fill="none" stroke="#29487d" stroke-width="5" stroke-linejoin="round"><path d="M25 4l6 15 16 1-12 11 4 15-14-8-14 8 4-15L3 20l16-1z"/></svg>Favoris</a>
                    <a href="#3" class="flex-1 text-center">Comptes</a>
                </div>
                <svg class="h-[76px] w-[25px]" viewBox="0 0 25 76" fill="none" stroke="#e4e4e4" stroke-width="4"><path d="M1 0l19 38L1 76"/></svg>
                <div class="flex items-center divide-x-2 divide-[#d4d4d4] leading-6"><a href="#4" class="my-[26px] px-[42px]">Situation</a><a href="#5" class="px-[41px] font-bold text-black">Opérations</a><a href="#6" class="px-[41px]">Services</a><a href="#7" class="px-[41px]">Profil</a><a href="#8" class="px-10">Simulations et souscriptions</a></div>
                <a href="#9" class="bg-[#ececec] px-10">Nos offres</a>
            </nav>
        </header>
        <section class="mx-auto mt-[30px] h-[805px] w-[2400px] bg-white">
            <h2 class="h-16 bg-[#416fa8] pl-10 text-[33px] font-extralight leading-[64px] text-white">Virements</h2>
            <div class="px-[60px] pt-12">
                <div class="flex h-[80px] items-center">
                    <div class="flex items-center pb-[10px]">
                        <a href="#retour" aria-label="Retour"><svg class="h-9 w-[22px]" viewBox="0 0 22 36"><path d="M19 2L4 18l15 16" fill="none" stroke="#222" stroke-width="4"/></svg></a>
                        <span class="ml-4 mt-2 h-10 w-[2px] bg-[#333]"></span>
                        <h1 class="ml-[22px] text-[56px] font-extralight text-[#222]">Détails du bénéficiaire Impôts_Nîmes</h1>
                    </div>
                    <span class="ml-5 mt-9 h-[6px] w-[84px] bg-[#c80000]"></span>
                    <button class="ml-auto h-14 rounded-[10px] bg-[#e0e0e0] px-5 font-bold">Modifier</button>
                    <button class="ml-5 h-14 rounded-[10px] bg-[#e0e0e0] px-5 font-bold">Supprimer</button>
                </div>
                <h3 class="mt-[84px] text-[39px] leading-[48px] text-[#005aab]">Informations principales</h3>
                <div class="mt-5 h-[268px] border-[5px] border-[#9ab3de] px-5 pt-5">
                    <table class="w-full border-collapse text-left leading-[48px] text-[#222]">
                        <tr class="border-b-2 border-[#c4c4c4] bg-[#ebebeb]"><th class="w-[553px] pl-5">Nom et prénom du bénéficiaire</th><td>Impôts_Nîmes</td></tr>
                        <tr class="border-b-2 border-[#c4c4c4] bg-[#ebebeb]"><th class="pl-5">IBAN</th><td>FR823000100600301G000000002</td></tr>
                        <tr class="border-b-2 border-[#c4c4c4] bg-[#ebebeb]"><th class="pl-5">BIC</th><td>BDFEFRPPCCT</td></tr>
                        <tr class="bg-[#ebebeb]"><th class="pl-5">Pays de résidence du bénéficiaire</th><td>France</td></tr>
                    </table>
                </div>
                <div class="mt-[82px] flex justify-center pl-[10px]">
                    <button class="flex h-[62px] w-[226px] items-center justify-center gap-2 border-2 border-[#416fa8] font-bold text-[#416fa8]"><svg class="mt-1 h-5 w-5" viewBox="0 0 20 20" fill="none" stroke="currentColor" stroke-width="2.600"><path d="M2 16V2h14M3 3l15 15"/></svg>Retour</button>
                </div>
            </div>
        </section>
        <footer class="mt-[60px] flex-1 bg-[#d6d2d1]">
            <div class="mx-auto w-[2400px] pt-9">
                <div class="grid grid-cols-8 items-center border-b-2 border-[#8b8786] pb-[30px] text-center leading-[35px]">
                    <a href="#q1" class="py-3"><svg class="mr-5 inline h-10 w-7" viewBox="0 0 28 40"><path d="M14 0q13 1 13 13 0 6-5 13l-8 14-8-14Q1 19 1 13 1 1 14 0zm0 5a8 8 0 1 0 0 16 8 8 0 0 0 0-16z" fill="#454545"/></svg>Caisse-<br>distributeur</a>
                    <a href="#q2" class="flex h-[66px] items-center justify-center gap-[18px] border-l-2 border-[#8b8786]"><svg class="h-[34px] w-[34px]" viewBox="0 0 34 34"><circle cx="17" cy="17" r="17" fill="#454545"/><path d="M27 7l-7 14-13 6 7-14z" fill="#d6d2d1"/><circle cx="17" cy="17" r="2.500" fill="#454545"/></svg>Assistance</a>
                    <a href="#q3" class="flex h-[66px] items-center justify-center gap-5 border-l-2 border-[#8b8786]"><svg class="h-[34px] w-[30px]" viewBox="0 0 30 34" fill="#454545"><circle cx="15" cy="4" r="4"/><path d="M0 9h30v3H20v22h-4V24h-2v10h-4V12H0z"/></svg>Accessibilité</a>
                    <a href="#q4" class="flex h-[66px] items-center justify-center gap-[18px] border-l-2 border-[#8b8786]"><svg class="h-9 w-9" viewBox="0 0 36 36"><circle cx="18" cy="18" r="16" fill="none" stroke="#454545" stroke-width="3"/><text x="18" y="26" font-family="DejaVu Sans" font-size="22" font-weight="700" text-anchor="middle" fill="#454545">€</text></svg>Tarifs</a>
                    <a href="#q5" class="flex h-[66px] items-center justify-center gap-4 border-l-2 border-[#8b8786]"><svg class="h-10 w-10" viewBox="0 0 40 40" fill="none" stroke="#454545"><path d="M28 22v15H1V4h27" stroke-width="3"/><path d="M6 11h17M6 16h17M6 21h15M6 26h13M6 31h10" stroke-width="3"/><path d="M36 2l3 3-15 22-4 4 1-6z" stroke-width="2.500"/></svg>Résiliation</a>
                    <a href="#q6" class="flex h-[66px] items-center justify-center gap-5 border-l-2 border-[#8b8786]"><svg class="h-[34px] w-[31px]" viewBox="0 0 31 34"><path d="M3 4h3V0h3v4h13V0h3v4h3q3 0 3 3v24q0 3-3 3H3q-3 0-3-3V7q0-3 3-3z" fill="#454545"/><circle cx="15.500" cy="14" r="5" fill="#d6d2d1"/><path d="M6 29q0-7 9.500-7t9.500 7z" fill="#d6d2d1"/></svg>Contacts</a>
                    <a href="#q7" class="flex h-[66px] items-center justify-center gap-4 border-l-2 border-[#8b8786]"><svg class="h-9 w-[38px]" viewBox="0 0 38 36" fill="none" stroke="#454545" stroke-width="2.600"><path d="M6 6H2v25q0 4 4 4h27q4 0 4-4V2H6v29"/><path d="M11 7h7v7h-7zM22 8h11M22 14h11M10 19h23M10 24h10M10 29h10M23 24h10M23 29h10" stroke-width="2"/></svg>Newsletter</a>
                    <a href="#q8" class="border-l-2 border-[#8b8786] py-3"><svg class="mr-4 inline h-9 w-9" viewBox="0 0 36 36" fill="none" stroke="#454545" stroke-width="3.500"><circle cx="7" cy="18" r="5"/><circle cx="28" cy="7" r="5"/><circle cx="28" cy="29" r="5"/><path d="M12 16l12-7M12 20l12 7"/></svg>Réseaux<br>sociaux</a>
                </div>
                <div class="flex justify-between pt-7 leading-[48px]">
                    <ul><li class="mb-1 font-bold">Nos espaces</li><li>Particuliers</li><li>Jeunes</li><li>Professionnels</li><li>Agriculteurs</li><li>Associations</li></ul>
                    <ul><li class="mb-1 font-bold">Nos domaines d'expertise</li><li>Gestion de patrimoine</li><li>Collectivités locales</li><li>Frontaliers</li></ul>
                    <ul><li class="mb-1 font-bold">Nos réseaux spécialisés</li><li>Crédit Mutuel Enseignant</li><li>Crédit Mutuel Professions de Santé</li><li>Banque Européenne du Crédit Mutuel</li></ul>
                    <ul><li class="mb-1 font-bold">Le Groupe Crédit Mutuel</li><li>Une banque différente</li><li>Recrutement</li></ul>
                    <ul><li class="mb-1 font-bold">Informations</li><li>Souscriptions, simulations, devis</li><li>Informations sur la sécurité</li><li>Guides et informations réglementaires</li>
                        <li class="flex items-center gap-[13px]">Accessibilité sourds et malentendants
                            <svg class="h-[42px] w-[42px]" viewBox="0 0 42 42"><circle cx="21" cy="21" r="21" fill="#454545"/><path d="M11 18q-1-9 10-10t9 12q0 8-7 11l-4 4M14 17q2-5 8-4M29 7L11 35M24 14l-4 20" fill="none" stroke="#d6d2d1" stroke-width="2.800"/></svg>
                            <svg class="h-[42px] w-[42px]" viewBox="0 0 42 42"><circle cx="21" cy="21" r="21" fill="#454545"/><path d="M13 14l5 6 5-11 2 1-2 9 6-8 2 1-3 8 5-4v13q-1 5-7 5H16q-5-2-7-9l1-6 5 1z" fill="#d6d2d1"/><path d="M22 24h10M22 28h10" stroke="#454545" stroke-width="1.500"/></svg></li></ul>
                </div>
            </div>
        </footer>
        <button class="absolute right-0 top-[766px] flex h-40 w-[120px] flex-col items-center rounded-l-[10px] bg-[#13589f] pt-6 text-[21px] leading-[22px] text-white shadow-[-3px_0_8px_rgba(0,0,0,0.6)]"><svg class="mb-2 h-[68px] w-[68px]" viewBox="0 0 68 68"><path d="M34 3a30 29 0 1 1-13 56L4 66l6-16A30 29 0 0 1 34 3z" fill="none" stroke="#fff" stroke-width="6"/><circle cx="22" cy="34" r="8" fill="#fff"/><circle cx="34" cy="34" r="5.500" fill="#fff"/><circle cx="46" cy="34" r="4.500" fill="#fff"/></svg>Besoin<br>d'aide ?</button>
        <div class="absolute -bottom-[9px] right-[558px] h-[9px] w-[90px] bg-[#416fa8]"></div>
    </div>
</main>

<!-- Mouse pointer -->
<svg class="absolute left-[2203px] top-[1442px] h-5 w-3" viewBox="0 0 12 20"><path d="M1 1v14l3-3 3 6 2-1-3-6h4z" fill="#111" stroke="#fff"/></svg>

<!-- Taskbar -->
<footer class="absolute inset-x-0 bottom-0 flex h-[54px] items-center bg-[#53544f] text-[#ddd]">
    <div class="flex w-[1132px] shrink-0 items-center gap-[13px] pl-[22px]">
        <svg class="h-11 w-11" viewBox="0 0 44 44" fill="none" stroke="#ddd" stroke-width="3"><circle cx="22" cy="22" r="20"/><path d="M12 12v14q0 6 6 6h9q6 0 6-6v-6q0-3-3-3t-3 3v6M27 22q0-5-3-5t-4 3v6" stroke-width="3.500"/></svg>
        <svg class="-ml-[2px] h-[38px] w-[45px]" viewBox="0 0 45 38"><rect width="45" height="38" fill="#59c2ac"/><rect width="45" height="7" fill="#438f80"/></svg>
        <svg class="-ml-2 h-10 w-[45px]" viewBox="0 0 45 40"><path d="M4 0h12l2 3h24v8H4z" fill="#fff"/><rect y="6" width="45" height="34" rx="2" fill="#59c2ac"/></svg>
        <svg class="-ml-[2px] h-[42px] w-[41px]" viewBox="0 0 42 42"><rect width="42" height="42" rx="8" fill="#2b2b2b"/><text x="5" y="18" font-family="Liberation Mono" font-size="15" font-weight="700" fill="#eee">$_</text></svg>
        <svg class="h-[42px] w-[41px]"><use href="#firefox"/></svg>
        <svg class="-mx-[3px] h-12 w-[47px]" preserveAspectRatio="none" viewBox="0 0 32 32"><rect width="32" height="32" fill="#000"/><path d="M2 32Q14 22 19 0h13v6Q26 26 20 32z" fill="#1e62e8"/><path d="M8 32Q18 20 23 0M13 32Q23 18 28 0" fill="none" stroke="#9cd4ff" stroke-width="1.600"/><path d="M0 32Q10 24 20 32z" fill="#d8f4ff"/></svg>
        <svg class="h-[42px] w-[41px]" viewBox="0 0 42 42"><rect width="42" height="42" rx="3" fill="#cf2f20"/><path d="M6 6h9v9H6zM27 6h9v9h-9zM6 27h9v9H6zM19 7v6M19 18h8M30 18v9M20 24v10M25 29h10M7 20h8M33 22h4" fill="none" stroke="#8d160f" stroke-width="2.500"/></svg>
        <svg class="h-[42px] w-[41px]" viewBox="0 0 42 42"><rect width="42" height="42" rx="8" fill="#b00000"/><text x="21" y="31" font-family="Liberation Sans" font-size="27" font-weight="700" font-style="italic" text-anchor="middle" fill="#fff">Fz</text></svg>
        <svg class="h-[42px] w-[41px]"><use href="#mailapp"/></svg>
        <svg class="h-[42px] w-[41px]" viewBox="0 0 42 42"><rect width="42" height="42" rx="8" fill="#9c96d6"/><rect x="10" y="7" width="22" height="28" rx="2" fill="#fff"/><path d="M13 14h16M13 18h16M13 22h16M13 26h10" stroke="#8a84c8" stroke-width="2"/></svg>
        <svg class="h-[42px] w-[41px]" viewBox="0 0 42 42"><rect width="42" height="42" rx="7" fill="#444"/><path d="M21 21h21v14q0 7-7 7H21z" fill="#ff6e1f"/><path d="M6 11h9M10.500 7v9M27 11h8M7 28l7 7M14 28l-7 7M27 29h9M27 34h9" stroke="#fff" stroke-width="2"/></svg>
        <svg class="h-[42px] w-[41px]" viewBox="0 0 42 42"><rect width="42" height="42" rx="8" fill="#35619e"/><path d="M7 12h28v21H7zM18 8h12v2H18z" fill="#fff"/><circle cx="24" cy="22" r="5" fill="none" stroke="#35619e" stroke-width="2.500"/></svg>
        <svg class="h-[42px] w-[41px]" viewBox="0 0 42 42"><rect width="42" height="42" rx="8" fill="#a98f3a"/><path d="M5 28h10v-4h16v10H15v-3H5z" fill="#fff"/><path d="M30 28q9-2 4-8-8-5-4-11" fill="none" stroke="#fff" stroke-width="2.500"/></svg>
        <div class="flex h-[42px] w-[41px] justify-center rounded-lg bg-gradient-to-br from-[#6a11cb] via-[#e0409a] to-[#9be015]"><svg class="h-5 w-7"><path d="M2 18L14 3l12 15" fill="none" stroke="#ddd" stroke-width="6"/></svg></div>
        <svg class="h-[42px] w-[41px]" viewBox="0 0 42 42"><rect width="42" height="42" rx="8" fill="#ee3046"/><path d="M13 11l20 11-20 10z" fill="#fff"/><path d="M9 16L21 3l12 13" fill="none" stroke="#ddd" stroke-width="5"/></svg>
        <svg class="h-[42px] w-[41px]" viewBox="0 0 42 42"><rect width="42" height="42" rx="8" fill="#3b7a2b"/><rect x="9" y="11" width="24" height="25" fill="#fff"/><path d="M12 16h10v8H12z" fill="#3b7a2b"/><path d="M25 16h5M25 20h5M12 28h18M12 32h10" stroke="#3b7a2b" stroke-width="2"/><path d="M9 16L21 3l12 13" fill="none" stroke="#ddd" stroke-width="5"/></svg>
        <svg class="h-[42px] w-[41px]" viewBox="0 0 42 42"><rect width="42" height="42" rx="8" fill="#141478"/><ellipse cx="21" cy="26" rx="9" ry="7" fill="#ff5a10"/><path d="M12 27l4-5 3 5 2-6 3 6 3-5 3 5-9 3z" fill="#ffe11a"/><path d="M8 26q0-17 13-17t13 17" fill="none" stroke="#e8e8e8" stroke-width="3"/><path d="M6 23h5v9H6zM31 23h5v9h-5z" fill="#e8e8e8"/></svg>
        <svg class="h-[42px] w-[41px]" viewBox="0 0 42 42"><rect width="42" height="42" rx="8" fill="#3a3a3a"/><path d="M1 2l6 6-4 6M11 2l6 6-4 6M21 2l6 6-4 6M31 2l6 6-4 6" fill="none" stroke="#fff" stroke-width="4"/></svg>
        <svg class="h-[42px] w-[41px]" viewBox="0 0 42 42"><rect width="42" height="42" rx="8" fill="#2f9df0"/><path d="M11 33q-7-1-6-8 1-5 6-5 1-9 10-9t10 9q6 0 6 6t-6 7z" fill="#fff"/><path d="M11 14L21 4l10 10" fill="none" stroke="#ddd" stroke-width="4"/></svg>
        <svg class="h-[42px] w-[41px]" viewBox="0 0 42 42"><rect width="42" height="42" rx="8" fill="#c4c4c4"/><path d="M5 15l10 14M15 15L5 29" stroke="#d33" stroke-width="3"/><path d="M14 15l10 14M24 15L14 29" stroke="#2a5c4a" stroke-width="3"/><path d="M24 15l12 14M36 15L24 29" stroke="#333" stroke-width="3"/></svg>
    </div>
    <div id="tasks" class="flex h-full"></div>
    <div class="ml-auto flex items-center gap-[15px] pr-[10px]">
        <span class="text-[33px] text-[#aaa]">fr</span>
        <svg class="h-11 w-11" viewBox="0 0 44 44"><rect x="3" y="3" width="39" height="30" rx="2" fill="#eee"/><rect x="7" y="7" width="31" height="22" fill="#555"/><path d="M18 33h10l4 9H13z" fill="#ddd"/><path d="M3 1v28h32z" fill="#e9c53a" stroke="#8f7410"/><path d="M9 14v10h12z" fill="#555"/></svg>
        <svg class="-ml-2 h-11 w-11" viewBox="0 0 44 44"><path d="M2 16h12l5 4 24-5v26H2z" fill="#f5df2e"/><path d="M1 30Q18 32 42 10v16H3z" fill="#fff27a" stroke="#b59b10"/></svg>
        <svg class="-ml-[13px] h-[53px] w-20" viewBox="0 0 80 53"><rect x="1" y="1" width="78" height="52" fill="#000" stroke="#bbb" stroke-width="2"/><path d="M3 46v7M8 50v3M16 46v7M24 50v3M34 51v2M42 50v2M52 43v10M62 50v3M72 51v2" stroke="#0a72c8" stroke-width="3"/></svg>
        <svg class="h-11 w-8" viewBox="0 0 32 44"><rect width="32" height="44" rx="15" fill="#ddd"/><path d="M7 13l18 18-9 8V5l9 8L7 31" fill="none" stroke="#53544f" stroke-width="2.500"/></svg>
        <svg class="h-11 w-[38px]" viewBox="0 0 38 44"><path d="M9 1h12v5h8v18h-5V11H6v27h14v5H1V6h8z" fill="#ddd"/><path d="M9 14h12v14L14 36H9zM30 24l-8 13h6l-3 7 12-13h-6l3-7z" fill="#ddd"/></svg>
        <svg class="h-11 w-9" viewBox="0 0 36 44"><path fill-rule="evenodd" d="M3 7h9q1-6 6-6t6 6h9q3 0 3 3v30q0 3-3 3H3q-3 0-3-3V10q0-3 3-3zm3 7v23h24V14z" fill="#ddd"/><path d="M16 17h4v11h-4zM16 31h4v4h-4z" fill="#ddd"/></svg>
        <svg class="h-11 w-[46px]" viewBox="0 0 46 44"><path d="M22 2l19 7q0 24-19 33Q3 33 3 9z" fill="#777" stroke="#ddd" stroke-width="4"/><path d="M22 8l-12 4q1 16 12 24z" fill="#ddd"/><circle cx="37" cy="35" r="8" fill="#f4722b"/></svg>
        <svg class="-ml-2 h-10 w-11" viewBox="0 0 44 40" fill="none" stroke="#ddd" stroke-width="5"><path d="M2 13q20-18 40 0M9 22q13-12 26 0M16 30q6-6 12 0"/><circle cx="22" cy="36" r="2"/></svg>
        <svg class="h-9 w-[43px]" viewBox="0 0 43 36"><path d="M16 2h27v32H16v-4q12 0 19-12Q27 7 16 7z" fill="#ddd"/><path d="M2 18q12-18 26 0-12 16-26 0zM9 18q7-8 13 0-7 8-13 0z" fill="none" stroke="#ddd" stroke-width="3"/></svg>
        <svg class="-ml-2 h-10 w-11" viewBox="0 0 44 40"><path d="M1 13h7L18 3v34L8 27H1z" fill="#ddd"/><path d="M23 13q5 7 0 14M29 8q8 12 0 24M36 3q11 17 0 34" fill="none" stroke="#ddd" stroke-width="3.500"/></svg>
        <time class="text-[36px]">mar. 19 mars, 16:50</time>
    </div>
</footer>

<script>
// Browser tabs: [icon, title]
const tabs = [['', 'Num'], ['occ', 'App'], ['wiki', 'Gue'], ['as', 'DJ ::'], ['ubuntu', 'font'], ['github', 'hitm'], ['info', 'Les'], ['none', 'Linux |'], ['github', 'GitH'], ['hb', 'How'], ['rings', 'Se c'], ['beam', 'Prax'], ['beam', 'Proj'], ['clip', 'Rea'], ['ghost', 'Gho'], ['man', 'man'], ['at', '[Pro'], ['at', 'Tou'], ['at', 'Adh'], ['at', '[App']];
document.getElementById('tabs').innerHTML = tabs.map(([icon, title]) => {
    if (!icon) return `<button class="w-[102px] shrink-0 overflow-hidden pl-2 text-left [mask-image:linear-gradient(to_right,black_20%,transparent_80%)]">${title}</button>`;
    if (icon === 'none') return `<button class="w-[152px] shrink-0 overflow-hidden whitespace-nowrap pl-4 text-left [mask-image:linear-gradient(to_right,black_60%,transparent_90%)]">${title}</button>`;
    return `<button class="flex w-[152px] shrink-0 items-center gap-3 pl-[15px]"><svg class="h-8 w-8 shrink-0"><use href="#${icon}"/></svg><span class="w-[66px] overflow-hidden whitespace-nowrap text-left [mask-image:linear-gradient(to_right,black_20%,transparent)]">${title}</span></button>`;
}).join('');

// File manager side pane
const places = ['C', 'folder', 'sel', 'note', 'folder', 'folder', 'folder', 'folder', 'folder', 'trash', 'A', 'note', 'note', 'note', 'F', 'yellow', 'folder', 'folder', 'folder', 'folder', 'R', 'folder'];
document.getElementById('places').innerHTML = places.map(p => {
    if (p.length === 1) return `<li class="h-[54px] pl-7 leading-[54px]">${p}</li>`;
    if (p === 'sel') return '<li class="flex h-[56px] items-center bg-[#59aa98] pl-10"><svg class="h-8 w-8"><use href="#folder"/></svg></li>';
    if (p === 'yellow') return '<li class="flex h-[56px] items-center pl-10"><span class="h-6 w-8 border-2 border-[#c79d10] bg-[#e9b90e]"></span></li>';
    return `<li class="flex h-[56px] items-center pl-10"><svg class="h-8 w-8"><use href="#${p}"/></svg></li>`;
}).join('');

// File rows, row 16 is the selected one
document.getElementById('files').innerHTML = Array.from({ length: 28 }, (_, i) =>
    i === 15 ? '<li class="h-[56px] bg-[#59aa98] pr-[10px] text-white">au</li>' : '<li class="h-[56px] pr-[10px]">au</li>').join('');

document.getElementById('slots').innerHTML = Array.from({ length: 10 }, () =>
    '<div class="h-11 w-[35px] rounded-r border-2 border-l-0 border-[#ccc] bg-[#fbfdfc]"></div>').join('');

// Open windows
const svg = inner => `<svg class="h-8 w-8" viewBox="0 0 42 42">${inner}</svg>`;
const ff = svg('<use href="#firefox"/>');
const dim = `<span class="opacity-50">${ff}</span>`;
const gd = svg('<use href="#greendoc"/>');
const pic = svg('<rect y="4" width="42" height="34" fill="#5a2c0c"/><rect x="8" y="8" width="26" height="26" fill="#b8702c"/><circle cx="22" cy="19" r="9" fill="#f3c074"/><path d="M0 30h42v8H0z" fill="#2c1406"/>');
const tasks = [svg('<use href="#mailapp"/>'), dim, dim, dim, dim, ff, ff,
    svg('<ellipse cx="20" cy="22" rx="18" ry="20" fill="#2f7fc0"/><path d="M4 16q10-16 20-8L8 26z" fill="#7fc0f0"/><path d="M36 4l4 3-14 28-4 2z" fill="#c09030"/>'),
    svg('<rect width="42" height="42" rx="8" fill="#bbb"/><circle cx="21" cy="21" r="16" fill="#fff"/><circle cx="21" cy="21" r="11" fill="none" stroke="#e8452c" stroke-width="9" stroke-dasharray="23 46"/><circle cx="21" cy="21" r="11" fill="none" stroke="#3b73d9" stroke-width="9" stroke-dasharray="23 46" stroke-dashoffset="-23"/><circle cx="21" cy="21" r="11" fill="none" stroke="#e8c02c" stroke-width="9" stroke-dasharray="23 46" stroke-dashoffset="-46"/><circle cx="21" cy="21" r="6" fill="#fff"/>'),
    pic, pic,
    svg('<rect width="42" height="42" rx="6" fill="#1f2b20"/><path d="M3 24h8l4-14 5 20 4-8h14" fill="none" stroke="#2a9b35" stroke-width="3"/>'),
    svg('<path d="M3 2h14l2 4h20v10H3z" fill="#eee"/><rect y="9" width="42" height="30" fill="#b84848"/>'),
    gd, gd, gd, gd,
    svg('<path d="M30 1l10 5-22 30-12 5 2-14z" fill="#111" stroke="#aaa" stroke-width="3"/>'),
    svg('<rect y="2" width="42" height="38" fill="#59c2ac"/><rect y="2" width="42" height="9" fill="#438f80"/>')];
document.getElementById('tasks').innerHTML = tasks.map((icon, i) => i === 6
    ? `<button class="flex h-full w-[91px] items-center gap-4 bg-[#59aa98] pl-2 text-[32px] text-white">${icon}<span>...</span></button>`
    : `<button class="flex h-full w-[91px] items-center gap-4 pl-2 text-[32px]">${icon}<span>...</span></button>`).join('');
</script>
</body>
</html>
